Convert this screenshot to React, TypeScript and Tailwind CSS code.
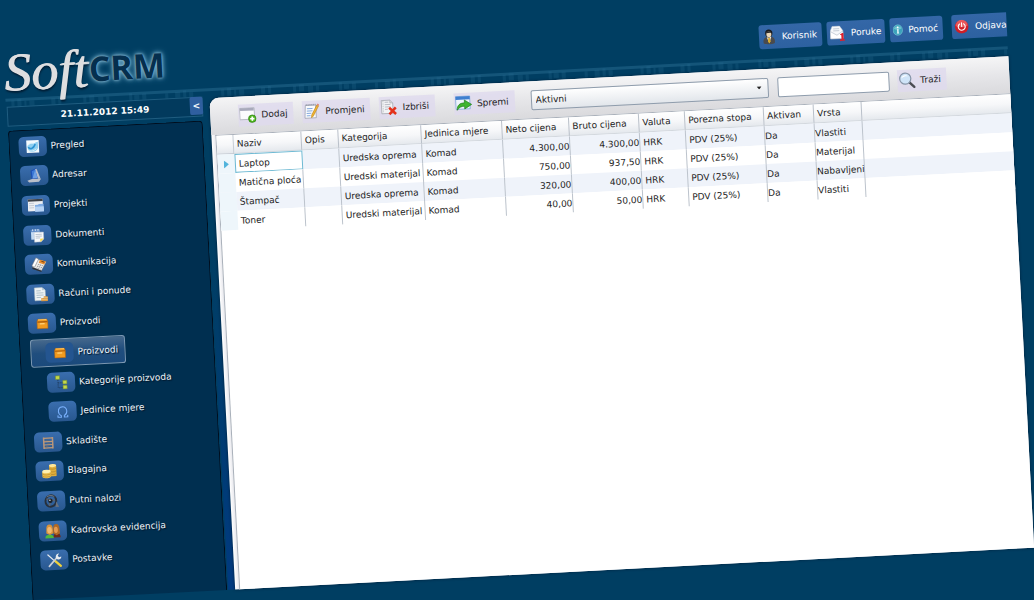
import React, { useState } from "react";

type IconProps = { className?: string };

/* ---------- header icons ---------- */

const UserIcon = () => (
  <svg viewBox="0 0 14 16" className="h-4 w-[14px]" aria-hidden="true">
    <path d="M1.500 14.500c-.8-3.600.4-6 3.500-6.500h4c3.100.5 4.300 2.900 3.500 6.500-1.500 1.200-9.500 1.200-11 0z" fill="#4a4b4e" />
    <path d="M4.800 8.300h4.400L7 14.500z" fill="#f4f0e4" />
    <path d="M6.300 9h1.500l.6 3.500L7 14.600l-1.200-2z" fill="#d9a92c" />
    <path d="M3.400 4.500C3.200 1.800 5 .6 7 .6s3.800 1.200 3.600 3.900c0 2.500-1.500 4.300-3.600 4.300S3.400 7 3.400 4.500z" fill="#17181b" />
    <ellipse cx="7" cy="5.600" rx="2.500" ry="2.900" fill="#e9d6b8" />
    <path d="M4.500 4.300c1.500 0 3.500-.4 5 0V2.600H4.500z" fill="#2a2a2c" />
  </svg>
);

const MessageIcon = () => (
  <svg viewBox="0 0 15 16" className="h-4 w-[15px]" aria-hidden="true">
    <path d="M.5 5.500 2.500 1h7.500l3 4.500V13H.5z" fill="#f7f9fb" stroke="#c3ccd6" strokeWidth=".5" />
    <path d="M3.500 3.500h6M3.500 5.500h6" stroke="#b9c3ce" strokeWidth=".8" />
    <path d="M.5 6l6.500 4 6-4v7.500H.5z" fill="#fff" stroke="#aeb9c6" strokeWidth=".6" />
    <path d="M9.800 9.500 12.300 8h1.200v6.500h1.300V16H9.700v-1.500h1.600v-4.200z" fill="#e0202c" />
  </svg>
);

const HelpIcon = () => (
  <svg viewBox="0 0 10 12" className="h-3 w-[10px]" aria-hidden="true">
    <ellipse cx="5" cy="6" rx="4.800" ry="5.200" fill="#3ba3bb" stroke="#8fd6e0" strokeWidth=".5" />
    <path d="M1.200 4.500C2 1.500 8 1.500 8.800 4.500 7 6 3 6 1.200 4.500z" fill="#a5e2e6" opacity=".5" />
    <circle cx="5" cy="3.400" r=".9" fill="#fff" />
    <path d="M4.400 5.100h1.300v3.600h.5v.8H3.900v-.8h.5z" fill="#fff" />
  </svg>
);

const PowerIcon = () => (
  <svg viewBox="0 0 14 14" className="size-[14px]" aria-hidden="true">
    <circle cx="7" cy="7" r="6.800" fill="#cf1f27" />
    <path d="M1 6a6 6 0 0 1 12 0c-3 2-9 2-12 0z" fill="#f1696b" opacity=".75" />
    <path d="M5 4.200a3.500 3.500 0 1 0 4 0" fill="none" stroke="#fff" strokeWidth="1.100" strokeLinecap="round" />
    <path d="M7 3.200v3.600" stroke="#fff" strokeWidth="1.100" strokeLinecap="round" />
  </svg>
);

/* ---------- toolbar icons ---------- */

const AddIcon = () => (
  <svg viewBox="0 0 18 18" className="size-[17px]" aria-hidden="true">
    <rect x=".5" y="2" width="15.500" height="12" fill="#fbfbfd" stroke="#b5b8c2" />
    <rect x="1" y="2" width="14.500" height="2.800" fill="#a8a9bb" />
    <circle cx="13.500" cy="13.500" r="4" fill="#4fb61f" stroke="#2c7d12" strokeWidth=".7" />
    <path d="M13.500 11.200v4.600M11.200 13.500h4.600" stroke="#fff" strokeWidth="1.700" />
  </svg>
);

const EditIcon = () => (
  <svg viewBox="0 0 18 18" className="size-[17px]" aria-hidden="true">
    <path d="M2.500 2.500h11v13.500h-12z" fill="#fafbfd" stroke="#9a9fae" strokeWidth=".8" />
    <path d="M3 2h10.500" stroke="#8b90a0" strokeWidth="1.600" strokeDasharray="1 1" />
    <path d="M4 6h6M3.800 8.500h6M3.500 11h5M3.500 13.500h4" stroke="#7ea6dc" strokeWidth="1" />
    <path d="m16.500 3.500-6 10.500-2 1.800.2-2.800 6-10.500z" fill="#f2b632" stroke="#b57b1a" strokeWidth=".6" />
    <path d="m14.700 2.500 1.800 1 .6-1.400-1.500-1z" fill="#e58172" />
  </svg>
);

const DeleteIcon = () => (
  <svg viewBox="0 0 18 18" className="size-[17px]" aria-hidden="true">
    <path d="M1.500 1.500h9l3 3v11h-12z" fill="#f2f3f5" stroke="#a3a7ae" strokeWidth=".8" />
    <path d="M10.500 1.500v3h3" fill="#d4d7dc" stroke="#a3a7ae" strokeWidth=".6" />
    <path d="M5 3.500h4M5 6h6M5 8.500h6M5 11h3" stroke="#b7bbc3" />
    <path d="M3.200 2v13" stroke="#c3c6cc" strokeWidth="1" strokeDasharray="1.500 1" />
    <path d="m9.500 9.500 7 7M16.500 9.500l-7 7" stroke="#e4321c" strokeWidth="2.700" />
  </svg>
);

const SaveIcon = () => (
  <svg viewBox="0 0 18 18" className="size-[17px]" aria-hidden="true">
    <rect x=".8" y="1.500" width="15" height="13.500" fill="#eef4fb" stroke="#7ba3d6" strokeWidth=".8" />
    <rect x=".8" y="1.500" width="15" height="3.500" fill="#3f7fd0" />
    <path d="M2 16c0-5.500 3-7.500 8-7.500V5.500l7.500 5L10 15v-3c-3.500 0-6 .8-8 4z" fill="#3fb52f" stroke="#1f7d1c" strokeWidth=".7" />
  </svg>
);

const SearchIcon = () => (
  <svg viewBox="0 0 18 18" className="size-[17px]" aria-hidden="true">
    <path d="m11.500 11.500 5 5" stroke="#4a4c52" strokeWidth="2.600" strokeLinecap="round" />
    <circle cx="7.300" cy="7.300" r="5.900" fill="#cfe4f8" stroke="#8795a8" strokeWidth="1.300" />
    <path d="M3.200 7c.3-3.500 5-4.500 7-2-2.500-.3-5 0-7 2z" fill="#fff" />
  </svg>
);

/* ---------- menu icons ---------- */

const Glyph = ({ children }: { children: React.ReactNode }) => (
  <svg viewBox="0 0 18 18" className="size-4" aria-hidden="true">
    {children}
  </svg>
);

const OverviewIcon = () => (
  <Glyph>
    <rect x="2" y="2" width="14" height="14" fill="#f3fafe" />
    <path d="M3 8c2-1 3.500-3 6-2.500S13 4 15 4v7c-2 3-4 4-7 4s-5-3-5-7z" fill="#8fcff0" />
    <path d="M4 9.500c1.500 3 5.500 2.500 8-3" fill="none" stroke="#2b93d3" strokeWidth="1.800" />
    <path d="M5 13.500c2 1 6 .5 8-2M4 7c2-2 4-2 6-1.500" fill="none" stroke="#d9f1fb" />
  </Glyph>
);
const AddressIcon = () => (
  <Glyph>
    <path d="M5 3.500 11.500 1 15 12 6 14z" fill="#1c4fb4" />
    <path d="M10 2 12 1.500 16 13h-3z" fill="#b4bccb" />
    <path d="M6.500 4 10.500 2.500l2 9.500H7z" fill="#3b79d6" />
    <path d="M10.500 2.500 7 12h5.500z" fill="#8fb9ec" opacity=".6" />
    <path d="m1 14.500 6-2 9.500.5L14 16.500H3z" fill="#b9bfca" />
  </Glyph>
);
const ProjectIcon = () => (
  <Glyph>
    <rect x="0" y="2" width="17" height="13.500" fill="#eceef3" />
    <rect x="0" y="2" width="17" height="2.500" fill="#3c4048" />
    <path d="M1.500 6.500h5.500M1.500 9h5.500M1.500 11.500h5.500" stroke="#c1c7d2" />
    <path d="M8 8.500h3.500l1-1H18V16H8z" fill="#7fabe3" />
    <path d="M8 10.500h10v5.500H8z" fill="#b5d2f5" />
  </Glyph>
);
const DocumentIcon = () => (
  <Glyph>
    <rect x="2" y="2.500" width="9.500" height="11" fill="#c5dbf3" />
    <path d="M2 2.500h9.500V5H2z" fill="#5e8cc9" />
    <path d="M5.500 5.500h10.500v8l-3 3H5.500z" fill="#f7f9fb" stroke="#b3bcc9" strokeWidth=".5" />
    <path d="M7 8h7M7 10h7M7 12h5" stroke="#b4bfcc" />
    <path d="M12 16.500v-3.500h4z" fill="#f3d44a" />
    <path d="M4 2v2M7 2v2M10 2v2" stroke="#dce9f7" />
  </Glyph>
);
const PhoneIcon = () => (
  <Glyph>
    <path d="M7 3 17.500 6.500 11.500 16.500 1.500 12z" fill="#eceae6" stroke="#5f636b" strokeWidth=".5" />
    <path d="M1.500 12v1.800l10 4v-1.300z" fill="#2e3035" />
    <path d="M6 1.500 9 3 4 12 1 10.500z" fill="#fff" stroke="#70747c" strokeWidth=".6" />
    <path d="m10.500 4 6.500 2.200-2 3.300-6-2.200z" fill="#e88a2c" />
    <path d="m12 5.800 3.300 1.200" stroke="#7a4512" strokeWidth="1.200" />
    <path d="m8.200 9 5.300 2M7 11l5.300 2M6 13l4.500 1.700" stroke="#8a8d94" strokeDasharray="1.300 .8" strokeWidth="1.100" />
  </Glyph>
);
const InvoiceIcon = () => (
  <Glyph>
    <path d="M2.500 1.500h8.500l3.500 3v11.500h-12z" fill="#eef3f4" stroke="#b5c2c8" strokeWidth=".6" />
    <path d="M11 1.500v3h3.500z" fill="#b9cbd4" />
    <path d="M4.500 5h5M4.500 7.500h8M4.500 10h8M4.500 12.500h5" stroke="#a9bcc6" />
    <path d="M9.500 13.500h3v-2h4.500v5.500H9.500z" fill="#d99a45" />
    <path d="M9.500 15H17M12.700 13H17" stroke="#f1c987" strokeWidth=".7" />
  </Glyph>
);
const BoxIcon = () => (
  <Glyph>
    <path d="M4.500 4.500h10l1 2.500v8H3.500V7z" fill="#f29a1e" stroke="#b9660c" strokeWidth=".6" />
    <path d="M3.800 7.500h11.500" stroke="#a85a0c" strokeWidth="1.200" />
    <path d="M4.800 5h9.500" stroke="#ffc865" />
    <rect x="6.500" y="9" width="5.500" height="1.300" fill="#ffd37c" />
  </Glyph>
);
const TreeIcon = () => (
  <Glyph>
    <path d="M5.500 6v9h6M5.500 9.500h6" fill="none" stroke="#1f3c60" strokeDasharray="1.500 1" />
    <rect x="3" y="1.500" width="4.500" height="4" fill="#c3d84a" stroke="#76902b" strokeWidth=".6" />
    <rect x="11" y="7" width="4.500" height="4" fill="#c3d84a" stroke="#76902b" strokeWidth=".6" />
    <rect x="11" y="12.500" width="4.500" height="4" fill="#c3d84a" stroke="#76902b" strokeWidth=".6" />
  </Glyph>
);
const OmegaIcon = () => (
  <Glyph>
    <path
      d="M3.500 13.300v2.200h3.800v-1.600C5.200 12.800 4.300 11 4.300 9c0-3 2-5 4.700-5s4.700 2 4.700 5c0 2-.9 3.800-3 4.900v1.600h3.800v-2.200"
      fill="none"
      stroke="#79b0fb"
      strokeWidth="1.200"
    />
  </Glyph>
);
const ShelfIcon = () => (
  <Glyph>
    <path d="M4 3.500v13M14 3.500v13" fill="none" stroke="#b8957a" strokeWidth="1.700" />
    <path d="M4 4.500h10M4 8.500h10M4 12h10M4 15.500h10" stroke="#c09a78" strokeWidth="1.300" />
    <path d="M6 7h4M8 10.500h4M6 14h3" stroke="#56677e" strokeWidth="1.300" />
  </Glyph>
);
const CoinsIcon = () => (
  <Glyph>
    <path d="M8.500 3v12h8V3z" fill="#e0ae3c" />
    <ellipse cx="12.500" cy="3" rx="4" ry="1.800" fill="#ffe698" />
    <path d="M8.500 6c2 1.500 6 1.500 8 0M8.500 9c2 1.500 6 1.500 8 0M8.500 12c2 1.500 6 1.500 8 0" fill="none" stroke="#b98a2a" strokeWidth=".8" />
    <path d="M.5 9.500v6c2 2 7.500 2 9.500 0v-6z" fill="#edc14f" />
    <ellipse cx="5.300" cy="9.300" rx="4.800" ry="1.900" fill="#fff0b0" />
    <path d="M.5 12c2 1.700 7.500 1.700 9.500 0M.5 14.300c2 1.700 7.500 1.700 9.500 0" fill="none" stroke="#bd8c2c" strokeWidth=".8" />
  </Glyph>
);
const WheelIcon = () => (
  <Glyph>
    <ellipse cx="8.500" cy="9" rx="6" ry="6.500" fill="none" stroke="#27303c" strokeWidth="2.200" transform="rotate(25 8.500 9)" />
    <path d="M4.200 4.500c2-2 6-2.500 8.500 0" fill="none" stroke="#8a95a3" strokeWidth=".9" />
    <path d="M3.500 6.500 13 9M8 9.500 6.500 14.500" stroke="#56616f" strokeWidth="1.800" />
    <circle cx="8" cy="8.700" r="2.500" fill="#1c232c" />
    <circle cx="7.500" cy="8" r=".9" fill="#d3dae2" />
    <path d="M14.500 9.500 17.500 16h-4z" fill="#6a727e" />
  </Glyph>
);
const PeopleIcon = () => (
  <Glyph>
    <path d="M0 17c0-3 2-4 5-4s5 1 5 4z" fill="#4fb83e" />
    <path d="M9.500 16.500c0-3.500 1.500-5 4-5s4 2 4 5z" fill="#6e2a1a" />
    <path d="M1.800 6c0-3 1.600-4.500 3.700-4.500S9 3 9 6l.5 5.500-4 2-4-2z" fill="#d8923a" />
    <ellipse cx="5.300" cy="8" rx="2.600" ry="3.600" fill="#f4b96e" />
    <path d="M9.500 6c0-3 1.500-4.500 3.500-4.500S16.500 3 16.500 6l.5 6-4 2-3.700-2.500z" fill="#b06824" />
    <ellipse cx="12.500" cy="8" rx="2.200" ry="3.500" fill="#e59a50" />
  </Glyph>
);
const ToolsIcon = () => (
  <Glyph>
    <path d="m2 3 8 8" stroke="#e4e8ec" strokeWidth="1.400" strokeLinecap="round" />
    <path d="m10 10.500 6 5.500" stroke="#eed13c" strokeWidth="2.600" strokeLinecap="round" />
    <path d="m3 16 9-9.500" stroke="#c9ced6" strokeWidth="1.900" strokeLinecap="round" />
    <path d="M11 7.500C10 4 12 2 14.500 2L13 4.500l1.500 1.800 2.500-.8c0 2.500-2.500 4-4.500 3z" fill="#e7eaee" />
  </Glyph>
);

/* ---------- header decoration ---------- */

const Circuit = ({ className = "" }: IconProps) => (
  <svg className={className} aria-hidden="true">
    <defs>
      <pattern id="circuit" width="210" height="14" patternUnits="userSpaceOnUse">
        <g fill="#2c7095" opacity=".22">
          <rect x="6" y="4" width="3" height="7" />
          <rect x="12" y="3" width="4" height="8" />
          <rect x="19" y="5" width="2" height="6" />
          <rect x="24" y="5" width="5" height="6" />
          <rect x="46" y="4" width="4" height="7" />
          <rect x="53" y="3" width="3" height="8" />
          <rect x="78" y="4" width="3" height="7" />
          <rect x="84" y="3" width="5" height="7" />
          <rect x="93" y="5" width="5" height="6" />
          <rect x="101" y="5" width="3" height="6" />
          <rect x="124" y="3" width="3" height="8" />
          <rect x="129" y="5" width="5" height="5" />
          <rect x="137" y="4" width="4" height="7" />
          <rect x="160" y="5" width="3" height="6" />
          <rect x="170" y="4" width="5" height="7" />
          <rect x="178" y="3" width="3" height="8" />
          <rect x="184" y="5" width="4" height="6" />
        </g>
      </pattern>
    </defs>
    <rect width="100%" height="14" fill="url(#circuit)" />
    <rect width="100%" y="2" height="3" fill="#2d7196" opacity=".45" />
  </svg>
);

/* ---------- data ---------- */

type MenuEntry = { label: string; icon: () => React.JSX.Element; sub?: boolean; active?: boolean };

const menu: MenuEntry[] = [
  { label: "Pregled", icon: OverviewIcon },
  { label: "Adresar", icon: AddressIcon },
  { label: "Projekti", icon: ProjectIcon },
  { label: "Dokumenti", icon: DocumentIcon },
  { label: "Komunikacija", icon: PhoneIcon },
  { label: "Računi i ponude", icon: InvoiceIcon },
  { label: "Proizvodi", icon: BoxIcon },
  { label: "Proizvodi", icon: BoxIcon, sub: true, active: true },
  { label: "Kategorije proizvoda", icon: TreeIcon, sub: true },
  { label: "Jedinice mjere", icon: OmegaIcon, sub: true },
  { label: "Skladište", icon: ShelfIcon },
  { label: "Blagajna", icon: CoinsIcon },
  { label: "Putni nalozi", icon: WheelIcon },
  { label: "Kadrovska evidencija", icon: PeopleIcon },
  { label: "Postavke", icon: ToolsIcon },
];

type Column = { title: string; width: string; cell: string };

const columns: Column[] = [
  { title: "Naziv", width: "w-[68px]", cell: "pl-[3px]" },
  { title: "Opis", width: "w-[37px]", cell: "pl-[3px]" },
  { title: "Kategorija", width: "w-[83px]", cell: "pl-[3px]" },
  { title: "Jedinica mjere", width: "w-[81px]", cell: "pl-[3px]" },
  { title: "Neto cijena", width: "w-[67px]", cell: "text-right" },
  { title: "Bruto cijena", width: "w-[70px]", cell: "text-right" },
  { title: "Valuta", width: "w-[46px]", cell: "pl-[3px]" },
  { title: "Porezna stopa", width: "w-[79px]", cell: "pl-[3px]" },
  { title: "Aktivan", width: "w-[50px]", cell: "" },
  { title: "Vrsta", width: "w-[48px]", cell: "" },
];

const rows: string[][] = [
  ["Laptop", "", "Uredska oprema", "Komad", "4.300,00", "4.300,00", "HRK", "PDV (25%)", "Da", "Vlastiti"],
  ["Matična ploća", "", "Uredski materijal", "Komad", "750,00", "937,50", "HRK", "PDV (25%)", "Da", "Materijal"],
  ["Štampač", "", "Uredska oprema", "Komad", "320,00", "400,00", "HRK", "PDV (25%)", "Da", "Nabavljeni"],
  ["Toner", "", "Uredski materijal", "Komad", "40,00", "50,00", "HRK", "PDV (25%)", "Da", "Vlastiti"],
];

/* ---------- parts ---------- */

const HeaderButton = ({ label, icon, className }: { label: string; icon: React.ReactNode; className: string }) => (
  <button
    type="button"
    className={`flex h-6 items-center gap-1.5 whitespace-nowrap bg-linear-to-b from-[#3467a7] to-[#2d61a0] pl-[3px] text-white ${className}`}
  >
    {icon}
    {label}
  </button>
);

const ToolButton = ({ label, icon, className = "" }: { label: string; icon: React.ReactNode; className?: string }) => (
  <button
    type="button"
    className={`flex h-[22px] shrink-0 items-center gap-[5px] whitespace-nowrap bg-[#dfdaee]/80 pl-px pr-1.5 text-[#1c1c1c] ${className}`}
  >
    {icon}
    {label}
  </button>
);

const MenuItem = ({ label, icon: Icon, sub, active }: MenuEntry) => (
  <li className="flex min-h-[28px] flex-1 items-center">
    <button
      type="button"
      className={`flex h-7 items-center gap-1 rounded-[3px] border pr-1.5 ${sub ? "ml-[10px] pl-[14px]" : "ml-[8px]"} ${
        active
          ? "border-[#7c98b3] bg-linear-to-b from-[#45688c] via-[#204e7e] to-[#1b4a7c]"
          : "border-transparent"
      }`}
    >
      <span
        className={`flex h-5 w-7 items-center justify-center rounded-[5px] ${
          active ? "bg-[#245590]" : "bg-linear-to-b from-[#3a6eae] to-[#28578f]"
        }`}
      >
        <Icon />
      </span>
      <span className="whitespace-nowrap [text-shadow:1px_1px_1px_#001528]">{label}</span>
    </button>
  </li>
);

const ProductTable = () => (
  <table className="w-full table-fixed border-separate border-spacing-0 text-left text-[#1d1d1d]">
    <colgroup>
      <col className="w-[17px]" />
      {columns.map((c) => (
        <col key={c.title} className={c.width} />
      ))}
      <col />
    </colgroup>
    <thead>
      <tr className="h-[19px] bg-linear-to-b from-white via-[#f6f7f9] to-[#e3e7ec]">
        <th className="border-b border-r border-[#c6ccd4] p-0" aria-label="Red" />
        {columns.map((c) => (
          <th
            key={c.title}
            className="whitespace-nowrap border-b border-r border-b-[#d3d8de] border-r-[#b9c0c9] py-0 pl-[3px] pr-0 font-normal"
          >
            {c.title}
          </th>
        ))}
        <th className="border-b border-[#d3d8de] p-0" aria-label="Prazno" />
      </tr>
    </thead>
    <tbody>
      {rows.map((row, r) => (
        <tr key={row[0]} className="h-[19px] odd:bg-[#eff3fa] even:bg-white">
          <td className="bg-[#eef6fb] p-0">
            {r === 0 && (
              <svg viewBox="0 0 5 8" className="ml-[6px] h-2 w-[5px]" aria-hidden="true">
                <path d="M0 0 5 4 0 8z" fill="#52b4dc" />
              </svg>
            )}
          </td>
          {row.map((value, c) => (
            <td
              key={columns[c].title}
              className={`whitespace-nowrap py-0 pr-0 ${columns[c].cell} ${
                r === 0 && c === 0
                  ? "border border-[#6db9d3] bg-white"
                  : c === 0
                    ? "border-r border-[#bcc3cc]"
                    : "border-r border-[#bcc3cc]"
              }`}
            >
              {value}
            </td>
          ))}
          <td className="p-0" />
        </tr>
      ))}
    </tbody>
  </table>
);

export default function App() {
  const [query, setQuery] = useState("");

  return (
    <div className="min-h-screen overflow-hidden bg-[#003e62] font-['DejaVu_Sans',Verdana,sans-serif] text-[9px] leading-[12px] text-[#eef4f9]">
      <div className="relative mr-[30px] flex min-h-[calc(100vh+1px)] origin-top-left -rotate-3 flex-col">
        <Circuit className="absolute left-0 top-[97px] h-[14px] w-full" />

        <header className="relative flex h-[100px] items-end justify-between">
          <h1 className="flex items-end gap-px">
            <span className="font-['Liberation_Serif',serif] text-[54px] italic leading-none text-[#dedee0] [text-shadow:1px_0_0_#dedee0,1px_2px_2px_#001a30]">
              Soft
            </span>
            <span className="pb-[10px] font-['Open_Sans',sans-serif] text-[34px] font-bold leading-none text-[#052f4e] [text-shadow:0_0_2px_#8fc0d8,0_0_4px_#7fb4cf,0_0_7px_#5c9cbd]">
              CRM
            </span>
          </h1>
          <nav aria-label="Korisnički izbornik" className="flex gap-[5px] pb-[11px]">
            <HeaderButton label="Korisnik" icon={<UserIcon />} className="rounded-[3px] pr-[5px]" />
            <HeaderButton label="Poruke" icon={<MessageIcon />} className="rounded-[3px] pr-[3px]" />
            <HeaderButton label="Pomoć" icon={<HelpIcon />} className="rounded-[3px] pr-[5px]" />
            <HeaderButton label="Odjava" icon={<PowerIcon />} className="ml-1 rounded-l-[3px] pr-0" />
          </nav>
        </header>

        <div className="relative flex flex-1">
          <aside className="ml-px flex w-[196px] shrink-0 flex-col gap-1 pt-[7px]">
            <div className="flex h-5 items-start border border-[#1f5d80] bg-[#02395c]/80">
              <time className="flex-1 self-center pl-3 text-center font-bold text-white" dateTime="2012-11-21T15:49">
                21.11.2012 15:49
              </time>
              <button
                type="button"
                aria-label="Sakrij izbornik"
                className="-mr-px -mt-px flex h-[18px] w-[13px] items-center justify-center rounded-[2px] bg-[#2f5f9f] font-bold"
              >
                &lt;
              </button>
            </div>
            <nav
              aria-label="Glavni izbornik"
              className="mr-px flex flex-1 flex-col rounded-t-[4px] border border-b-0 border-[#000d1c] bg-[#002f50]"
            >
              <ul className="flex flex-1 flex-col pb-[24px] pt-px">
                {menu.map((item, i) => (
                  <MenuItem key={i} {...item} />
                ))}
              </ul>
            </nav>
          </aside>

          <div className="w-[7px] shrink-0 bg-linear-to-b from-transparent from-30% to-[#003a80]" />

          <main className="mt-[9px] flex flex-1 flex-col rounded-tl-[9px] bg-linear-to-r from-white to-[#e9e9ee] to-[4px] pl-1 shadow-[0_0_3px_#001c36]">
            <div className="-ml-1 flex h-[37px] items-center rounded-tl-[9px] bg-linear-to-b from-[#f5f5f6] via-[#e6e6e9] to-[#dadadd] pl-7">
              <div className="flex gap-[9px]">
                <ToolButton label="Dodaj" icon={<AddIcon />} />
                <ToolButton label="Promjeni" icon={<EditIcon />} />
                <ToolButton label="Izbriši" icon={<DeleteIcon />} />
                <ToolButton label="Spremi" icon={<SaveIcon />} className="ml-[10px]" />
              </div>
              <div className="relative ml-4 w-[238px]">
                <select
                  aria-label="Status"
                  className="block h-[20px] w-full appearance-none rounded-[2px] border border-[#8e9cac] bg-linear-to-b from-white to-[#e2e6eb] px-1 text-[#1c1c1c]"
                  defaultValue="Aktivni"
                >
                  <option>Aktivni</option>
                  <option>Neaktivni</option>
                </select>
                <svg viewBox="0 0 5 3" className="pointer-events-none absolute right-[7px] top-[8px] h-[3px] w-[5px]" aria-hidden="true">
                  <path d="M0 0h5L2.500 3z" fill="#222" />
                </svg>
              </div>
              <input
                type="text"
                aria-label="Pojam za pretragu"
                value={query}
                onChange={(e) => setQuery(e.target.value)}
                className="ml-[9px] h-[20px] w-28 rounded-[2px] border border-[#8e9cac] bg-white px-1 text-[#1c1c1c]"
              />
              <ToolButton label="Traži" icon={<SearchIcon />} className="ml-2" />
            </div>
            <div className="flex-1 border-l border-t border-[#a9b0ba] bg-white">
              <ProductTable />
            </div>
          </main>
        </div>
      </div>
    </div>
  );
}
